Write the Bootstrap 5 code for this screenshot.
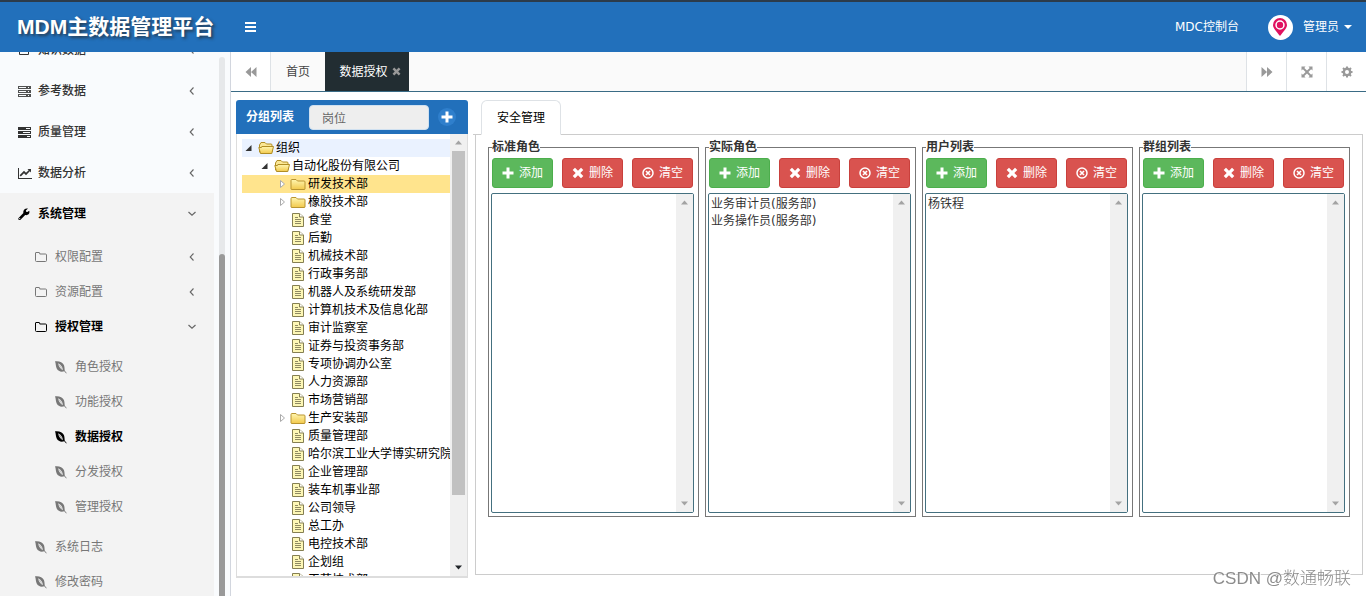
<!DOCTYPE html>
<html lang="zh-CN">
<head>
<meta charset="utf-8">
<meta name="viewport" content="width=device-width, initial-scale=1">
<title>MDM主数据管理平台</title>
<link href="https://cdn.jsdelivr.net/npm/bootstrap@5.3.0/dist/css/bootstrap.min.css" rel="stylesheet">
<style>
body{font:12px/18px "DejaVu Sans","Noto Sans CJK SC",sans-serif;color:#333;background:#fff}
a{text-decoration:none;color:inherit}
svg{display:block;flex:none;fill:currentColor}
.topbar{height:52px;background:#2270bb;border-top:2px solid #2c3b4a;color:#fff}
.brand-name{font:bold 21px/30px "Liberation Sans","Noto Sans CJK SC",sans-serif;text-shadow:2px 2px 3px rgba(40,40,40,.7);width:229px;padding-left:17px}
.plain{background:none;border:0;padding:0;color:inherit;line-height:18px}
.avatar{width:25px;height:25px;background:#fff;color:#e0115f;margin:0 10px 0 29px}
.user-menu{margin-right:14px;gap:5px}
/* side menu */
.sidebar{width:231px;background:#f9fbfd;border-right:1px solid #d2d6de}
.side-nav{width:214px;margin-top:-23px}
.side-nav a{display:flex;align-items:center}
.side-nav .chev{margin-left:auto;margin-right:17px;color:#666}
.lv1>a{height:41px;padding-left:18px;font-weight:500;color:#333}
.lv1>a svg:first-child,.lv2>a svg:first-child{width:14px;margin-right:6px}
.lv2>a,.lv3>a{height:35px;color:#777}
.lv2>a{padding-left:34px}
.lv2>a svg:first-child{margin-right:7px}
.lv3>a{padding-left:54px}
.lv3>a svg{margin-right:7px}
.sub-list{padding:5px 0}
.side-nav .opened{background:#f3f3f3}
.side-nav .current{color:#000;font-weight:600}
.side-track{width:6px;margin:5px 5px 0 5px;background:#e6e8ea;border-radius:3px;padding-top:197px}
.side-thumb{background:#999;border-radius:3px 3px 0 0}
/* page tabs */
.pagetabs{height:40px;background:#fafafa;border-bottom:1px solid #3a6b85}
.tool{width:40px;background:#fff;color:#999;border:0 solid #ddd}
.page-home{width:54px;color:#444}
.page-active{width:84px;background:#222d32;color:#fff;padding-left:6px}
.page-active button{color:#999}
/* group panel */
.group-panel{width:232px;margin:8px 0 18px 5px}
.group-head{height:34px;background:#2270bb;color:#fff;border-radius:3px 3px 0 0;padding-left:10px}
.group-head label{width:63px}
.group-input{width:120px;height:25px;background:#eee;border:1px solid #cfe0f0;border-radius:4px;color:#666;padding:0 12px;font-size:12px;line-height:18px}
.add-round{width:18px;height:18px;border-radius:9px;background:#2f7fcc;color:#fff;margin-left:9px}
.group-body{border:1px solid #ddd;border-top:0;border-bottom-width:2px;padding-left:5px}
.tree{padding-top:5px;color:#000}
.tree a{display:flex;align-items:center;height:18px;white-space:nowrap}
.tree a svg{margin-right:2px}
.tree .t0{background:#eaf2ff}
.tree .t1{padding-left:16px}
.tree .t2{padding-left:32px}
.tree .leaf{padding-left:48px}
.tree .picked{background:#ffe48d}
.tree .arrow{margin:0!important}
.gutter{width:17px;background:#f0f0f0;color:#a3a3a3}
.gutter svg{height:17px;width:17px}
.tree-thumb{width:13px;height:344px;background:#c1c1c1}
/* work area */
.work{margin:8px 3px 21px 5px}
.work .nav-tabs{border-color:#ccc;padding-left:8px;height:35px}
.work .nav-link{color:#555;border-color:#ddd #ddd #fff;width:80px;height:35px;padding:8px 0;text-align:center}
.work-body{border:1px solid #ccc;border-top:0;margin-left:2px;padding:4px 12px}
.role-grid{display:grid;grid-template-columns:repeat(4,minmax(0,1fr));gap:6px}
.rolebox{border:1px solid #777;padding:3px 4px 3px 2px}
.rolebox legend{float:none;width:auto;margin:0 0 0 1px;font-size:12px;line-height:16px;font-weight:600}
.btn-row{padding:0 1px;margin-bottom:5px}
.btn-row .btn{flex:0 1 61px;height:30px;padding:0;border-radius:3px;font-size:12px;color:#fff;gap:5px;display:flex;align-items:center;justify-content:center}
.btn-add{background:#5cb85c;border-color:#4cae4c}
.btn-del{background:#d9534f;border-color:#c9403c}
.listbox{height:320px;border:1px solid #44707f;border-radius:2px}
.listbox select{border:0;background:none;color:#333;overflow:hidden;padding:0;font-size:12px;outline:0;min-width:0}
.listbox option{height:17px;line-height:17px;padding:0 2px;min-height:17px}
.watermark{position:fixed;right:15px;bottom:5px;font:17px/24px "Liberation Sans","Noto Sans CJK SC",sans-serif;font-weight:300;color:#8c8c8c;text-shadow:1px 1px 0 #fff}
</style>
</head>
<body class="vh-100 d-flex flex-column overflow-hidden">
<svg width="0" height="0" class="position-absolute" aria-hidden="true">
<symbol id="i-bars" viewBox="0 0 12 10"><path d="M0 0h11v2H0zM0 4h11v2H0zM0 8h11v2H0z"/></symbol>
<symbol id="i-pin" viewBox="0 0 16 20"><path fill-rule="evenodd" d="M8 1a7 7 0 0 1 7 7C15 11 12 14 8 19 4 14 1 11 1 8a7 7 0 0 1 7-7zm0 2.300a4.700 4.700 0 1 0 0 9.400A4.700 4.700 0 0 0 8 3.300zm0 1.500a3.200 3.200 0 1 1 0 6.400 3.200 3.200 0 0 1 0-6.400z"/></symbol>
<symbol id="i-caret" viewBox="0 0 8 4"><path d="M0 0h8L4 4z"/></symbol>
<symbol id="i-check" viewBox="0 0 14 12"><path fill="none" stroke="currentColor" d="M10.500 6v4.500h-9v-9h8M4 5l2.500 2.500L12 2"/></symbol>
<symbol id="i-server" viewBox="0 0 14 12"><path fill-rule="evenodd" d="M0 1h13v3H0zm1 1v1h7V2zm9 0v1h1V2zM0 5h13v3H0zm1 1v1h7V6zm9 0v1h1V6zM0 9h13v3H0zm1 1v1h7v-1zm9 0v1h1v-1z" opacity=".85"/></symbol>
<symbol id="i-tasks" viewBox="0 0 14 12"><path fill-rule="evenodd" d="M0 1h13v3H0zm8 1v1h4V2zM0 5h13v3H0zm5 1v1h7V6zM0 9h13v3H0zm9 1v1h3v-1z"/></symbol>
<symbol id="i-chart" viewBox="0 0 14 12"><path d="M0 1h1v10h13v1H0zM9.500 2H13v3.500l-1.200-1.200L8 8.200 6 6.200 2.800 9.400 1.600 8.200 6 3.800l2 2 2.700-2.600z"/></symbol>
<symbol id="i-wrench" viewBox="0 0 14 14"><path fill-rule="evenodd" d="M11.200 3.800c1 2.500-1 5-4 4.200L2.500 12.700c-1.200 1.100-3-.6-1.900-1.800L5.400 6C4.700 3.300 7 .9 10 1.600L7.900 3.400l.2 1.300 1.300.2zM1.700 11a.6.6 0 1 0 .01 1.200A.6.6 0 0 0 1.700 11z"/></symbol>
<symbol id="i-folder" viewBox="0 0 14 12"><path fill="none" stroke="currentColor" d="M1.500 2Q1.500 1.500 2 1.500h3q.7 0 .7.700v.8h5.800q1 0 1 1v5.500q0 1-1 1h-9q-1 0-1-1z"/></symbol>
<symbol id="i-leaf" viewBox="0 0 14 14"><path fill-rule="evenodd" d="M1 1.300C5 .8 8.700 2 9.900 5c.8 2 .6 4 .9 5.800l1.900 2.300-.4.300-2.100-2.100C7.500 12.300 4.200 11.600 2.700 8.600 1.700 6.500 1.900 3.500 1 1.300zM4.200 3.200c.3 3 2 5.600 4.800 7-.2-3-2-5.500-4.800-7z"/><path fill="none" stroke="currentColor" stroke-width=".4" d="M5 4.500l3.500 5"/></symbol>
<symbol id="i-left" viewBox="0 0 10 10"><path fill="none" stroke="currentColor" stroke-width="1.100" d="M6.500 1.500L3.200 5l3.300 3.500"/></symbol>
<symbol id="i-down" viewBox="0 0 10 10"><path fill="none" stroke="currentColor" stroke-width="1.200" d="M1.500 3L5 6.300l3.500-3.300"/></symbol>
<symbol id="i-back" viewBox="0 0 12 10"><path d="M6 0v10L.5 5zM11.500 0v10L6 5z"/></symbol>
<symbol id="i-fwd" viewBox="0 0 12 10"><path d="M.5 0v10L6 5zM6 0v10l5.500-5z"/></symbol>
<symbol id="i-full" viewBox="0 0 12 12"><path d="M0.500.5h4L3.300 1.900 6 4.600l2.700-2.700L7.500.5h4v4l-1.400-1.200L7.400 6l2.700 2.700 1.400-1.200v4h-4l1.200-1.400L6 7.400l-2.700 2.700 1.200 1.400h-4v-4l1.400 1.200L4.600 6 1.900 3.300.5 4.500z"/></symbol>
<symbol id="i-gear" viewBox="0 0 12 12"><circle cx="6" cy="6" r="3.200" fill="none" stroke="currentColor" stroke-width="2.400"/><path fill="none" stroke="currentColor" stroke-width="2" d="M6 .5v2M6 9.500v2M.5 6h2M9.500 6h2M2 2l1.500 1.500M8.500 8.500L10 10M10 2L8.500 3.500M3.500 8.500L2 10"/></symbol>
<symbol id="i-plus" viewBox="0 0 12 12"><path d="M4.500.5h3v4h4v3h-4v4h-3v-4h-4v-3h4z"/></symbol>
<symbol id="i-x" viewBox="0 0 12 12"><path d="M3 .8L6 3.700 9 .8 11.300 3 8.300 6l3 3L9 11.300l-3-3-3 3L.7 9l3-3-3-3z"/></symbol>
<symbol id="i-xo" viewBox="0 0 12 12"><circle cx="6" cy="6" r="5" fill="none" stroke="currentColor" stroke-width="1.500"/><path fill="none" stroke="currentColor" stroke-width="1.600" d="M4 4l4 4M8 4L4 8"/></symbol>
<symbol id="i-up" viewBox="0 0 17 17"><path d="M5 10.500h7L8.500 6.500z"/></symbol>
<symbol id="i-dn" viewBox="0 0 17 17"><path d="M5 6.500h7l-3.500 4z"/></symbol>
<symbol id="t-open" viewBox="0 0 16 18"><path fill="#333" d="M9.500 6v6h-6z"/></symbol>
<symbol id="t-shut" viewBox="0 0 16 18"><path fill="#fff" stroke="#aaa" d="M6.500 5.500v7L10.500 9z"/></symbol>
<linearGradient id="gold" x2="0" y2="1"><stop stop-color="#fff6b0"/><stop offset="1" stop-color="#f2c94c"/></linearGradient>
<symbol id="t-fopen" viewBox="0 0 16 18"><path fill="#fbe795" stroke="#b08d24" d="M1.500 13V6l1.500-2.500h4L8.500 5H13q1 0 1 1v7z"/><path fill="url(#gold)" stroke="#b08d24" d="M3.800 7.500h11.700L13.800 14.500H2.500L.8 8.500H3.500z"/></symbol>
<symbol id="t-folder" viewBox="0 0 16 18"><path fill="url(#gold)" stroke="#b99531" d="M1 14V5.500Q1 4.500 2 4.500h4L7.500 6H14q1 0 1 1v7q0 .5-1 .5H2Q1 14.500 1 14z"/></symbol>
<symbol id="t-file" viewBox="0 0 16 18"><path fill="#fdf7b6" stroke="#857f52" d="M2.500 2.500h7L13.500 6v9.500h-11z"/><path fill="#fff" stroke="#857f52" d="M9.500 2.500V6h4"/><path stroke="#8f8a62" d="M5 6.500h3M5 8.500h6M5 10.500h6M5 12.500h6"/></symbol>
</svg>

<header class="topbar d-flex align-items-center flex-shrink-0">
  <div class="brand-name text-nowrap">MDM主数据管理平台</div>
  <button class="plain ms-3" aria-label="菜单"><svg width="12" height="10"><use href="#i-bars"/></svg></button>
  <a href="#" class="ms-auto">MDC控制台</a>
  <span class="avatar rounded-circle d-flex align-items-center justify-content-center"><svg width="16" height="20"><use href="#i-pin"/></svg></span>
  <button class="plain user-menu d-flex align-items-center">管理员<svg width="8" height="4"><use href="#i-caret"/></svg></button>
</header>

<div class="d-flex flex-fill" style="min-height:0">
  <aside class="sidebar d-flex flex-shrink-0 overflow-hidden">
    <ul class="side-nav list-unstyled mb-0 flex-shrink-0">
      <li class="lv1"><a href="#"><svg height="12"><use href="#i-check"/></svg>知识数据<svg class="chev" width="10" height="10"><use href="#i-left"/></svg></a></li>
      <li class="lv1"><a href="#"><svg height="12"><use href="#i-server"/></svg>参考数据<svg class="chev" width="10" height="10"><use href="#i-left"/></svg></a></li>
      <li class="lv1"><a href="#"><svg height="12"><use href="#i-tasks"/></svg>质量管理<svg class="chev" width="10" height="10"><use href="#i-left"/></svg></a></li>
      <li class="lv1"><a href="#"><svg height="12"><use href="#i-chart"/></svg>数据分析<svg class="chev" width="10" height="10"><use href="#i-left"/></svg></a></li>
      <li class="lv1 opened"><a href="#" class="current"><svg height="14"><use href="#i-wrench"/></svg>系统管理<svg class="chev" width="10" height="10"><use href="#i-down"/></svg></a>
        <ul class="sub-list list-unstyled">
          <li class="lv2"><a href="#"><svg height="12"><use href="#i-folder"/></svg>权限配置<svg class="chev" width="10" height="10"><use href="#i-left"/></svg></a></li>
          <li class="lv2"><a href="#"><svg height="12"><use href="#i-folder"/></svg>资源配置<svg class="chev" width="10" height="10"><use href="#i-left"/></svg></a></li>
          <li class="lv2"><a href="#" class="current"><svg height="12"><use href="#i-folder"/></svg>授权管理<svg class="chev" width="10" height="10"><use href="#i-down"/></svg></a>
            <ul class="sub-list list-unstyled">
              <li class="lv3"><a href="#"><svg width="14" height="14"><use href="#i-leaf"/></svg>角色授权</a></li>
              <li class="lv3"><a href="#"><svg width="14" height="14"><use href="#i-leaf"/></svg>功能授权</a></li>
              <li class="lv3"><a href="#" class="current"><svg width="14" height="14"><use href="#i-leaf"/></svg>数据授权</a></li>
              <li class="lv3"><a href="#"><svg width="14" height="14"><use href="#i-leaf"/></svg>分发授权</a></li>
              <li class="lv3"><a href="#"><svg width="14" height="14"><use href="#i-leaf"/></svg>管理授权</a></li>
            </ul>
          </li>
          <li class="lv2"><a href="#"><svg height="14"><use href="#i-leaf"/></svg>系统日志</a></li>
          <li class="lv2"><a href="#"><svg height="14"><use href="#i-leaf"/></svg>修改密码</a></li>
        </ul>
      </li>
    </ul>
    <div class="side-track d-flex flex-column"><div class="side-thumb flex-fill"></div></div>
  </aside>

  <main class="flex-fill d-flex flex-column" style="min-width:0">
    <nav class="pagetabs d-flex flex-shrink-0">
      <button class="tool border-end d-flex align-items-center justify-content-center" aria-label="向左"><svg width="12" height="10"><use href="#i-back"/></svg></button>
      <a href="#" class="page-home d-flex align-items-center justify-content-center">首页</a>
      <div class="page-active d-flex align-items-center justify-content-center"><a href="#">数据授权</a><button class="plain ms-1" aria-label="关闭"><svg width="9" height="9"><use href="#i-x"/></svg></button></div>
      <button class="tool border-start ms-auto d-flex align-items-center justify-content-center" aria-label="向右"><svg width="12" height="10"><use href="#i-fwd"/></svg></button>
      <button class="tool border-start d-flex align-items-center justify-content-center" aria-label="全屏"><svg width="12" height="12"><use href="#i-full"/></svg></button>
      <button class="tool border-start d-flex align-items-center justify-content-center" aria-label="设置"><svg width="12" height="12"><use href="#i-gear"/></svg></button>
    </nav>

    <div class="d-flex flex-fill" style="min-height:0">
      <section class="group-panel d-flex flex-column flex-shrink-0">
        <div class="group-head d-flex align-items-center flex-shrink-0">
          <label for="post" class="fw-bold">分组列表</label>
          <input id="post" class="group-input" type="text" value="岗位" readonly>
          <button class="plain add-round d-flex align-items-center justify-content-center" aria-label="添加分组"><svg width="12" height="12"><use href="#i-plus"/></svg></button>
        </div>
        <div class="group-body d-flex flex-fill overflow-hidden">
          <ul class="tree list-unstyled mb-0 flex-fill overflow-hidden">
            <li><a href="#" class="t0"><svg class="arrow" width="16" height="18"><use href="#t-open"/></svg><svg width="16" height="18"><use href="#t-fopen"/></svg>组织</a></li>
            <li><a href="#" class="t1"><svg class="arrow" width="16" height="18"><use href="#t-open"/></svg><svg width="16" height="18"><use href="#t-fopen"/></svg>自动化股份有限公司</a></li>
            <li><a href="#" class="t2 picked"><svg class="arrow" width="16" height="18"><use href="#t-shut"/></svg><svg width="16" height="18"><use href="#t-folder"/></svg>研发技术部</a></li>
            <li><a href="#" class="t2"><svg class="arrow" width="16" height="18"><use href="#t-shut"/></svg><svg width="16" height="18"><use href="#t-folder"/></svg>橡胶技术部</a></li>
            <li><a href="#" class="leaf"><svg width="16" height="18"><use href="#t-file"/></svg>食堂</a></li>
            <li><a href="#" class="leaf"><svg width="16" height="18"><use href="#t-file"/></svg>后勤</a></li>
            <li><a href="#" class="leaf"><svg width="16" height="18"><use href="#t-file"/></svg>机械技术部</a></li>
            <li><a href="#" class="leaf"><svg width="16" height="18"><use href="#t-file"/></svg>行政事务部</a></li>
            <li><a href="#" class="leaf"><svg width="16" height="18"><use href="#t-file"/></svg>机器人及系统研发部</a></li>
            <li><a href="#" class="leaf"><svg width="16" height="18"><use href="#t-file"/></svg>计算机技术及信息化部</a></li>
            <li><a href="#" class="leaf"><svg width="16" height="18"><use href="#t-file"/></svg>审计监察室</a></li>
            <li><a href="#" class="leaf"><svg width="16" height="18"><use href="#t-file"/></svg>证券与投资事务部</a></li>
            <li><a href="#" class="leaf"><svg width="16" height="18"><use href="#t-file"/></svg>专项协调办公室</a></li>
            <li><a href="#" class="leaf"><svg width="16" height="18"><use href="#t-file"/></svg>人力资源部</a></li>
            <li><a href="#" class="leaf"><svg width="16" height="18"><use href="#t-file"/></svg>市场营销部</a></li>
            <li><a href="#" class="t2"><svg class="arrow" width="16" height="18"><use href="#t-shut"/></svg><svg width="16" height="18"><use href="#t-folder"/></svg>生产安装部</a></li>
            <li><a href="#" class="leaf"><svg width="16" height="18"><use href="#t-file"/></svg>质量管理部</a></li>
            <li><a href="#" class="leaf"><svg width="16" height="18"><use href="#t-file"/></svg>哈尔滨工业大学博实研究院</a></li>
            <li><a href="#" class="leaf"><svg width="16" height="18"><use href="#t-file"/></svg>企业管理部</a></li>
            <li><a href="#" class="leaf"><svg width="16" height="18"><use href="#t-file"/></svg>装车机事业部</a></li>
            <li><a href="#" class="leaf"><svg width="16" height="18"><use href="#t-file"/></svg>公司领导</a></li>
            <li><a href="#" class="leaf"><svg width="16" height="18"><use href="#t-file"/></svg>总工办</a></li>
            <li><a href="#" class="leaf"><svg width="16" height="18"><use href="#t-file"/></svg>电控技术部</a></li>
            <li><a href="#" class="leaf"><svg width="16" height="18"><use href="#t-file"/></svg>企划组</a></li>
            <li><a href="#" class="leaf"><svg width="16" height="18"><use href="#t-file"/></svg>工艺技术部</a></li>
          </ul>
          <div class="gutter d-flex flex-column align-items-center flex-shrink-0">
            <svg><use href="#i-up"/></svg>
            <div class="tree-thumb"></div>
            <svg class="mt-auto text-dark"><use href="#i-dn"/></svg>
          </div>
        </div>
      </section>

      <section class="work flex-fill d-flex flex-column" style="min-width:0">
        <ul class="nav nav-tabs">
          <li class="nav-item"><a class="nav-link active" href="#">安全管理</a></li>
        </ul>
        <div class="work-body flex-fill">
          <div class="role-grid">
            <fieldset class="rolebox">
              <legend>标准角色</legend>
              <div class="btn-row d-flex justify-content-between">
                <button class="btn btn-add"><svg width="12" height="12"><use href="#i-plus"/></svg>添加</button>
                <button class="btn btn-del"><svg width="12" height="12"><use href="#i-x"/></svg>删除</button>
                <button class="btn btn-del"><svg width="12" height="12"><use href="#i-xo"/></svg>清空</button>
              </div>
              <div class="listbox d-flex">
                <select multiple class="flex-fill" aria-label="标准角色"></select>
                <div class="gutter d-flex flex-column justify-content-between"><svg><use href="#i-up"/></svg><svg><use href="#i-dn"/></svg></div>
              </div>
            </fieldset>
            <fieldset class="rolebox">
              <legend>实际角色</legend>
              <div class="btn-row d-flex justify-content-between">
                <button class="btn btn-add"><svg width="12" height="12"><use href="#i-plus"/></svg>添加</button>
                <button class="btn btn-del"><svg width="12" height="12"><use href="#i-x"/></svg>删除</button>
                <button class="btn btn-del"><svg width="12" height="12"><use href="#i-xo"/></svg>清空</button>
              </div>
              <div class="listbox d-flex">
                <select multiple class="flex-fill" aria-label="实际角色"><option>业务审计员(服务部)</option><option>业务操作员(服务部)</option></select>
                <div class="gutter d-flex flex-column justify-content-between"><svg><use href="#i-up"/></svg><svg><use href="#i-dn"/></svg></div>
              </div>
            </fieldset>
            <fieldset class="rolebox">
              <legend>用户列表</legend>
              <div class="btn-row d-flex justify-content-between">
                <button class="btn btn-add"><svg width="12" height="12"><use href="#i-plus"/></svg>添加</button>
                <button class="btn btn-del"><svg width="12" height="12"><use href="#i-x"/></svg>删除</button>
                <button class="btn btn-del"><svg width="12" height="12"><use href="#i-xo"/></svg>清空</button>
              </div>
              <div class="listbox d-flex">
                <select multiple class="flex-fill" aria-label="用户列表"><option>杨铁程</option></select>
                <div class="gutter d-flex flex-column justify-content-between"><svg><use href="#i-up"/></svg><svg><use href="#i-dn"/></svg></div>
              </div>
            </fieldset>
            <fieldset class="rolebox">
              <legend>群组列表</legend>
              <div class="btn-row d-flex justify-content-between">
                <button class="btn btn-add"><svg width="12" height="12"><use href="#i-plus"/></svg>添加</button>
                <button class="btn btn-del"><svg width="12" height="12"><use href="#i-x"/></svg>删除</button>
                <button class="btn btn-del"><svg width="12" height="12"><use href="#i-xo"/></svg>清空</button>
              </div>
              <div class="listbox d-flex">
                <select multiple class="flex-fill" aria-label="群组列表"></select>
                <div class="gutter d-flex flex-column justify-content-between"><svg><use href="#i-up"/></svg><svg><use href="#i-dn"/></svg></div>
              </div>
            </fieldset>
          </div>
        </div>
      </section>
    </div>
  </main>
</div>
<div class="watermark">CSDN @数通畅联</div>
<script src="https://cdn.jsdelivr.net/npm/bootstrap@5.3.0/dist/js/bootstrap.bundle.min.js"></script>
</body>
</html>
